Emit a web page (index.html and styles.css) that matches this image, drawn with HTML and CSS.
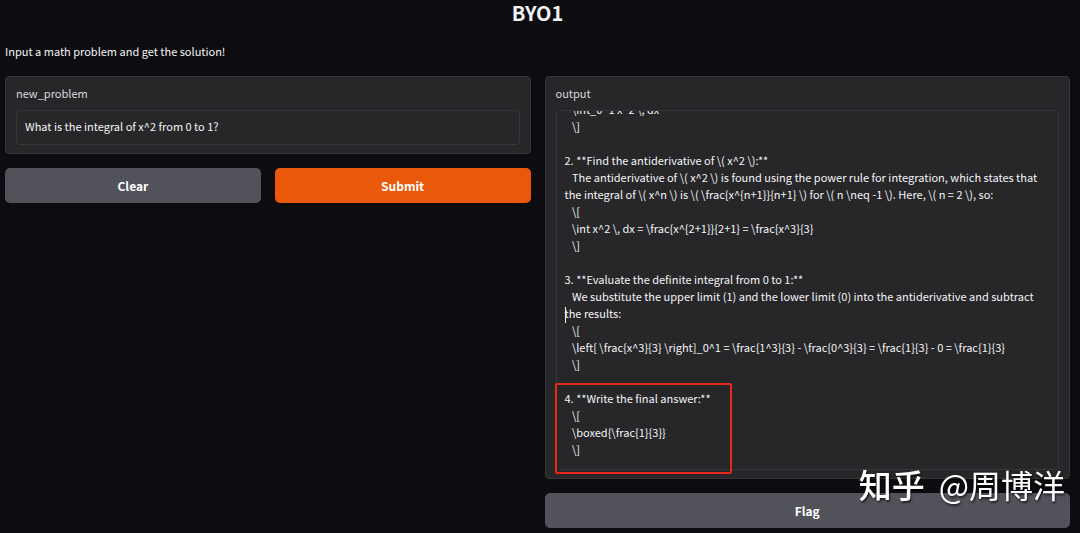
FILE: index.html
```html
<!DOCTYPE html>
<html lang="en">
<head>
<meta charset="utf-8">
<title>BYO1</title>
<link rel="stylesheet" href="styles.css">
</head>
<body>
<main class="app">
  <h1 class="title">BYO1</h1>
  <p class="description">Input a math problem and get the solution!</p>
  <div class="columns">
    <section class="column">
      <div class="panel">
        <label class="label" for="problem">new_problem</label>
        <input class="field" id="problem" type="text" value="What is the integral of x^2 from 0 to 1?">
      </div>
      <div class="actions">
        <button class="button" type="button">Clear</button>
        <button class="button primary" type="button">Submit</button>
      </div>
    </section>
    <section class="column">
      <div class="panel">
        <label class="label" for="output">output</label>
        <div class="output-wrap">
          <textarea class="field output" id="output" readonly>1. **Set up the integral:**
   \[
   \int_0^1 x^2 \, dx
   \]

2. **Find the antiderivative of \( x^2 \):**
   The antiderivative of \( x^2 \) is found using the power rule for integration, which states that the integral of \( x^n \) is \( \frac{x^{n+1}}{n+1} \) for \( n \neq -1 \). Here, \( n = 2 \), so:
   \[
   \int x^2 \, dx = \frac{x^{2+1}}{2+1} = \frac{x^3}{3}
   \]

3. **Evaluate the definite integral from 0 to 1:**
   We substitute the upper limit (1) and the lower limit (0) into the antiderivative and subtract the results:
   \[
   \left[ \frac{x^3}{3} \right]_0^1 = \frac{1^3}{3} - \frac{0^3}{3} = \frac{1}{3} - 0 = \frac{1}{3}
   \]

4. **Write the final answer:**
   \[
   \boxed{\frac{1}{3}}
   \]</textarea>
          <span class="caret"></span>
          <span class="highlight"></span>
        </div>
      </div>
      <button class="button" type="button">Flag</button>
      <div class="watermark"><strong class="brand">知乎</strong><span>@周博洋</span></div>
    </section>
  </div>
</main>
<script src="script.js"></script>
</body>
</html>
```
FILE: styles.css
```css
* {
  box-sizing: border-box;
}

body {
  margin: 0;
  background: #0d0d11;
  color: #f4f4f6;
  font-family: "Noto Sans CJK SC", "Noto Sans", sans-serif;
  font-size: 11px;
  line-height: 17px;
}

.app {
  padding: 0 10px 4px 5px;
}

.title {
  margin: 0 0 17px;
  font-size: 20px;
  line-height: 26px;
  font-weight: 700;
  text-align: center;
}

.description {
  margin: 0 0 16px;
}

.columns {
  display: grid;
  grid-template-columns: 1fr 1fr;
  gap: 14px;
  align-items: start;
}

.column {
  position: relative;
  display: flex;
  flex-direction: column;
  gap: 14px;
  min-width: 0;
}

.panel {
  display: flex;
  flex-direction: column;
  gap: 8px;
  padding: 8px 10px;
  border: 1px solid #35353a;
  border-radius: 4px;
  background: #27272a;
}

.label {
  align-self: flex-start;
  color: #d8d8dd;
}

.field {
  display: block;
  width: 100%;
  margin: 0;
  padding: 7px 8px 9px;
  border: 1px solid #35353a;
  border-radius: 4px;
  outline: none;
  background: #27272a;
  color: inherit;
  font: inherit;
}

.output-wrap {
  position: relative;
}

.output {
  height: 360px;
  padding-bottom: 11px;
  resize: none;
  overflow-y: scroll;
  scrollbar-width: none;
}

.caret {
  position: absolute;
  left: 9px;
  top: 197px;
  width: 1px;
  height: 16px;
  background: #f0f0f2;
}

.highlight {
  position: absolute;
  left: -1px;
  bottom: -4px;
  width: 177px;
  height: 91px;
  border: 2px solid #e8281e;
  border-radius: 2px;
}

.actions {
  display: grid;
  grid-template-columns: 1fr 1fr;
  gap: 14px;
}

.button {
  padding: 9px 16px;
  border: 0;
  border-radius: 5px;
  background: #52525b;
  color: #fff;
  font: inherit;
  font-size: 12px;
  font-weight: 700;
}

.primary {
  background: #ea580c;
}

.watermark {
  position: absolute;
  right: 5px;
  bottom: 22px;
  display: flex;
  gap: 14px;
  color: #fff;
  font-size: 32px;
  line-height: 44px;
  font-weight: 400;
  white-space: nowrap;
  text-shadow: 1px 2px 2px rgba(0, 0, 0, 0.6);
  pointer-events: none;
}

.brand {
  font-size: 33px;
  font-weight: 500;
}
```
FILE: script.js
```js
const output = document.getElementById("output");
output.scrollTop = output.scrollHeight;
```
